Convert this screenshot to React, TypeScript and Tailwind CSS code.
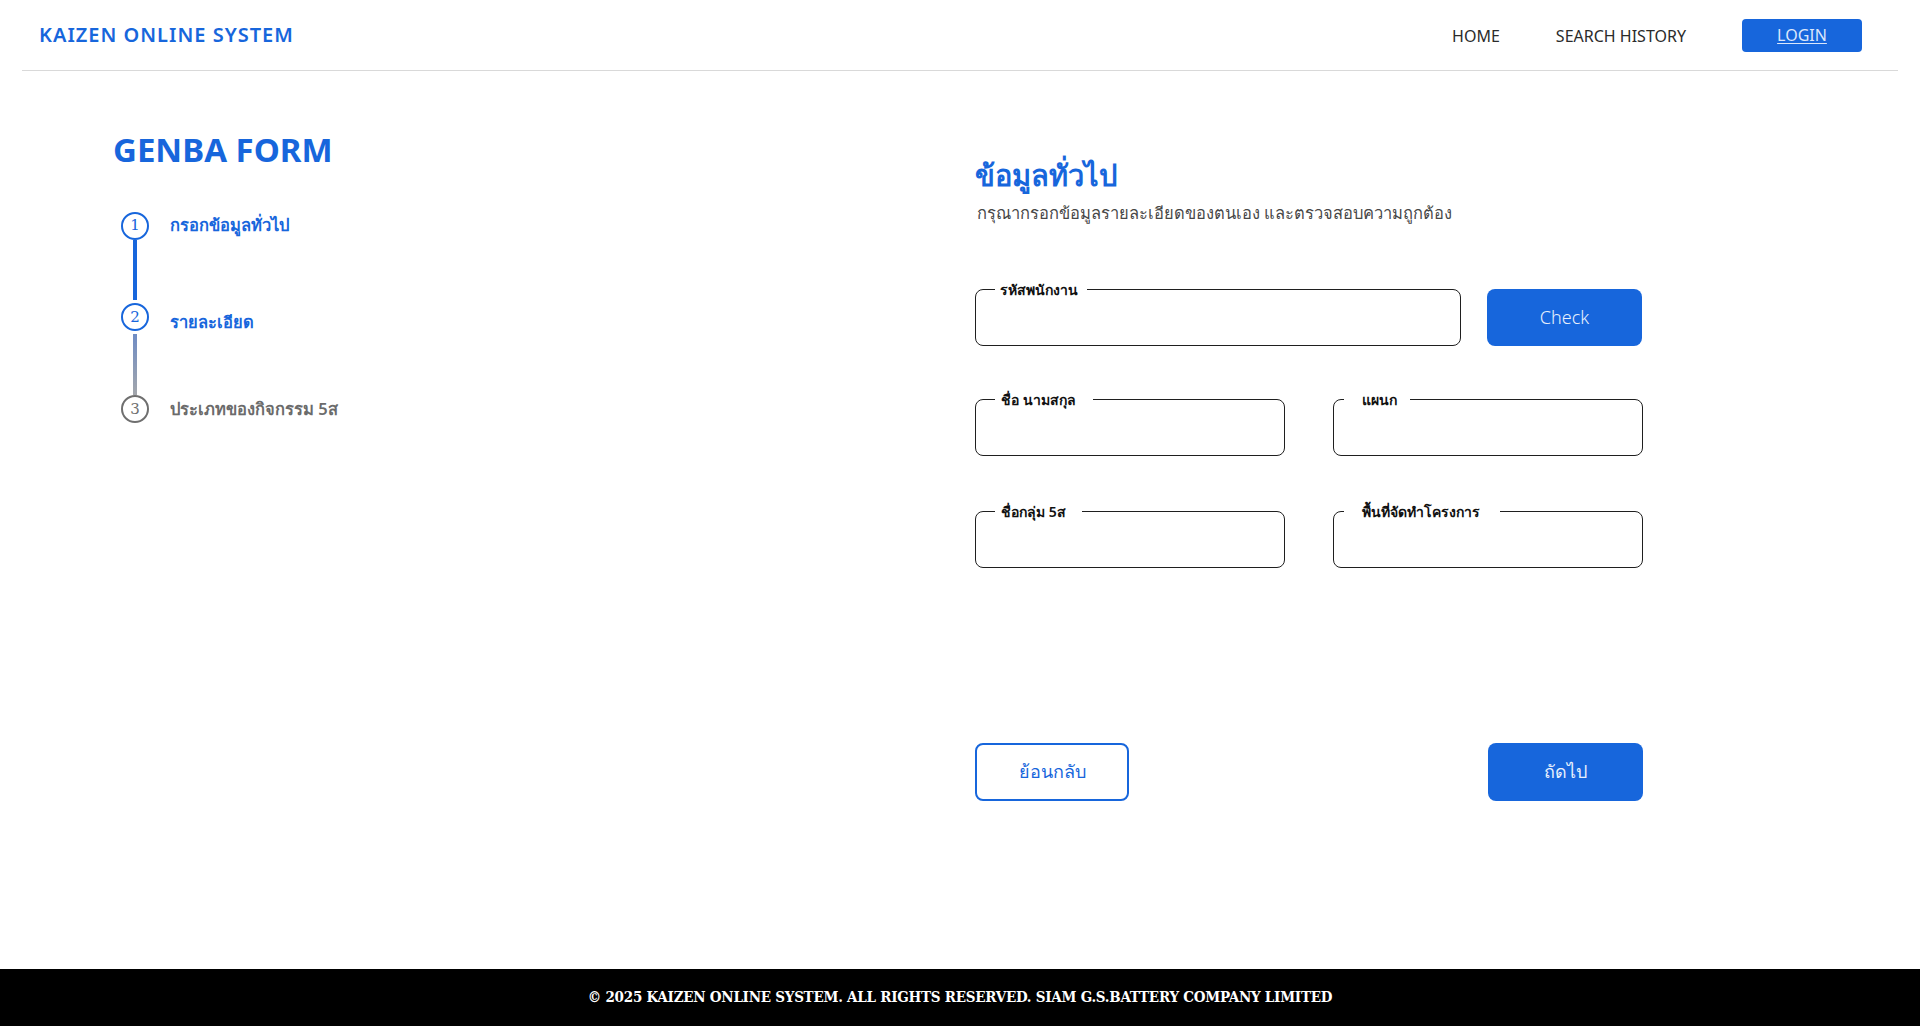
import type { ReactNode } from 'react'

const BLUE = 'text-[#1766dc]'

function Header() {
  return (
    <header className="mx-[22px] h-[71px] border-b border-[#d9d9d9] flex items-center justify-between pl-[17px] pr-[36px]">
      <div className={`text-[20px] font-semibold tracking-[1px] ${BLUE}`}>KAIZEN ONLINE SYSTEM</div>
      <nav className="flex items-center gap-[56px] text-[16px] text-[#2b2b2b]">
        <a className="cursor-pointer mt-[2px]">HOME</a>
        <a className="cursor-pointer mt-[2px]">SEARCH HISTORY</a>
        <button className="w-[120px] h-[33px] rounded-[4px] bg-[#1766dc] text-[16px] text-[#dbe7fb] underline underline-offset-2">
          LOGIN
        </button>
      </nav>
    </header>
  )
}

function StepCircle({ n, active }: { n: number; active: boolean }) {
  return (
    <div
      className={`w-[28px] h-[28px] rounded-full border-2 flex items-center justify-center text-[15px] font-['DejaVu_Serif',serif] font-light shrink-0 ${
        active ? 'border-[#1766dc] text-[#1766dc]' : 'border-[#6f6f6f] text-[#6f6f6f]'
      }`}
    >
      {n}
    </div>
  )
}

function Step({ n, label, active, children }: { n: number; label: string; active: boolean; children?: ReactNode }) {
  return (
    <div className="flex flex-col">
      <div className="flex items-center gap-[21px]">
        <StepCircle n={n} active={active} />
        <span
          className={`text-[16.5px] font-semibold ${active ? 'text-[#1766dc]' : 'text-[#6b6b6b]'} ${n === 2 ? 'mt-[10px]' : ''}`}
        >
          {label}
        </span>
      </div>
      {children}
    </div>
  )
}

function Stepper() {
  return (
    <div className="flex flex-col ml-[8px] mt-[37px]">
      <Step n={1} label="กรอกข้อมูลทั่วไป" active>
        <div className="ml-[12px] w-[4px] h-[60px] bg-[#1766dc]" />
      </Step>
      <Step n={2} label="รายละเอียด" active>
        <div className="ml-[12px] w-[4px] h-[61px] bg-gradient-to-b from-[#6f8cc4] to-[#a3a6ab]" />
      </Step>
      <Step n={3} label="ประเภทของกิจกรรม 5ส" active={false} />
    </div>
  )
}

function Field({
  label,
  width,
  inset,
  legendPad
}: {
  label: string
  width: string
  inset: string
  legendPad: string
}) {
  return (
    <fieldset className={`${width} h-[66px] rounded-lg border border-[#1f1f1f] ${inset}`}>
      <legend className={`text-[14px] leading-[20px] font-semibold text-[#111] ${legendPad}`}>{label}</legend>
    </fieldset>
  )
}

export default function App() {
  return (
    <div className="min-h-screen flex flex-col bg-white font-['Noto_Sans',sans-serif]">
      <Header />

      <main className="flex-1 flex">
        <section className="w-[975px] pl-[113px] pt-[54px]">
          <h1 className={`text-[33px] font-bold ${BLUE}`}>GENBA FORM</h1>
          <Stepper />
        </section>

        <section className="w-[668px] pt-[80px]">
          <h2 className={`text-[29px] font-semibold leading-[48px] ${BLUE}`}>ข้อมูลทั่วไป</h2>
          <p className="mt-[2px] ml-[2px] text-[16.5px] text-[#474747]">
            กรุณากรอกข้อมูลรายละเอียดของตนเอง และตรวจสอบความถูกต้อง
          </p>

          <div className="mt-[54px] flex items-end gap-[26px]">
            <Field label="รหัสพนักงาน" width="w-[486px]" inset="pl-[19px]" legendPad="pl-[5px] pr-[9px]" />
            <button className="w-[155px] h-[57px] rounded-lg bg-[#1766dc] text-[18px] font-light text-[#e8f0fd]">
              Check
            </button>
          </div>

          <div className="mt-[44px] grid grid-cols-2 gap-x-[48px] gap-y-[46px]">
            <Field label="ชื่อ นามสกุล" width="w-[310px]" inset="pl-[19px]" legendPad="pl-[6px] pr-[17px]" />
            <Field label="แผนก" width="w-[310px]" inset="pl-[10px]" legendPad="pl-[18px] pr-[13px]" />
            <Field label="ชื่อกลุ่ม 5ส" width="w-[310px]" inset="pl-[19px]" legendPad="pl-[6px] pr-[16px]" />
            <Field label="พื้นที่จัดทำโครงการ" width="w-[310px]" inset="pl-[10px]" legendPad="pl-[18px] pr-[20px]" />
          </div>

          <div className="mt-[175px] flex justify-between">
            <button className="w-[154px] h-[58px] rounded-lg border-2 border-[#1766dc] text-[18px] font-light text-[#1766dc]">
              ย้อนกลับ
            </button>
            <button className="w-[155px] h-[58px] rounded-lg bg-[#1766dc] text-[18px] font-light text-[#e8f0fd]">
              ถัดไป
            </button>
          </div>
        </section>
      </main>

      <footer className="h-[57px] bg-black flex items-center justify-center">
        <span className="text-white text-[15px] tracking-[-0.25px] font-bold font-['DejaVu_Serif',serif] font-stretch-condensed">
          © 2025 KAIZEN ONLINE SYSTEM. ALL RIGHTS RESERVED. SIAM G.S.BATTERY COMPANY LIMITED
        </span>
      </footer>
    </div>
  )
}
